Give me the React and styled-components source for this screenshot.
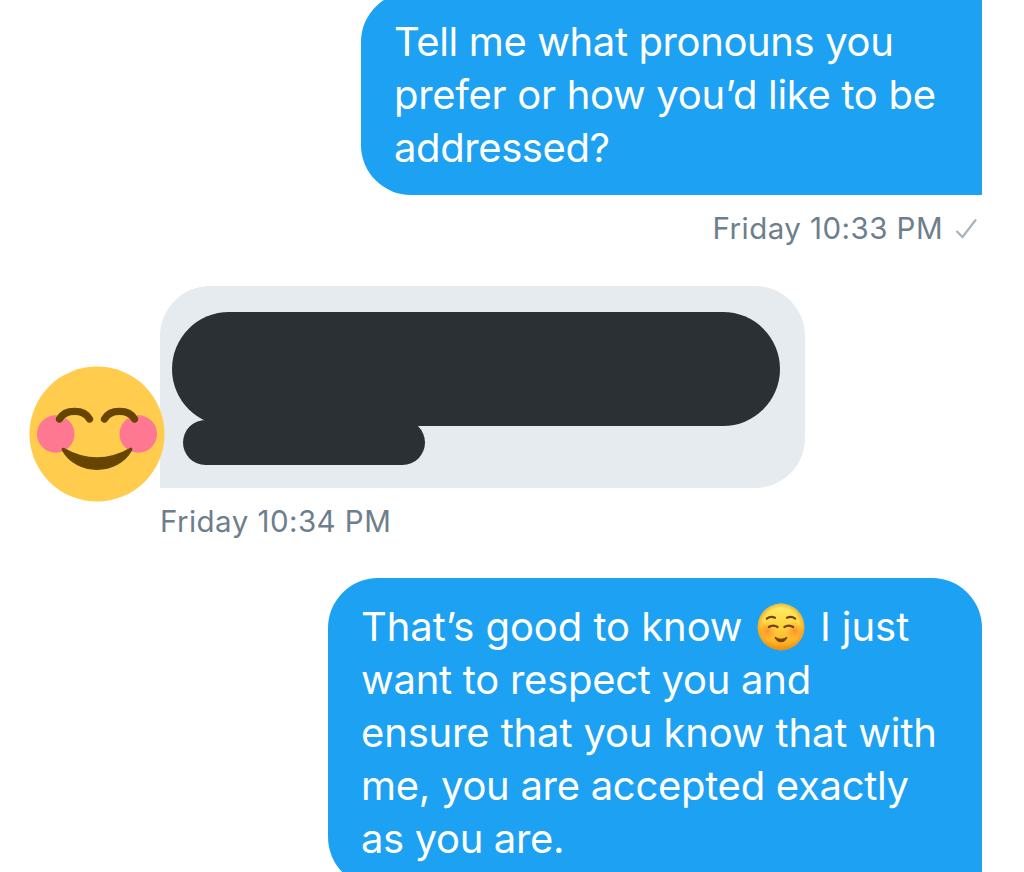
import React from 'react'
import styled, { createGlobalStyle } from 'styled-components'

const GlobalStyle = createGlobalStyle`
  * {
    box-sizing: border-box;
  }
  body {
    margin: 0;
    background: #fff;
    font-family: Inter, 'Liberation Sans', sans-serif;
  }
`

const Thread = styled.main`
  width: 1024px;
  height: 872px;
  overflow: hidden;
  display: flex;
  flex-direction: column;
  padding: 0 42px 0 29px;
`

const Bubble = styled.div`
  flex: none;
  width: ${({ $width }) => $width}px;
  border-radius: 50px;
`

const SentBubble = styled(Bubble)`
  align-self: flex-end;
  margin-top: ${({ $cut }) => ($cut ? '-8px' : 0)};
  padding: ${({ $cut }) => ($cut ? '23px 33px 21px' : '22px 33px')};
  color: #fff;
  background: #1da1f2;
  border-top-right-radius: ${({ $cut }) => ($cut ? 0 : '50px')};
  border-bottom-right-radius: 0;
`

const Line = styled.div`
  display: flex;
  align-items: center;
  height: 53px;
  font-size: 40px;
  line-height: 53px;
  letter-spacing: ${({ $tracking }) => $tracking || 0}px;
  white-space: pre;
`

const Meta = styled.div`
  flex: none;
  display: flex;
  align-items: center;
  justify-content: ${({ $sent }) => ($sent ? 'flex-end' : 'flex-start')};
  height: ${({ $sent }) => ($sent ? 91 : 90)}px;
  padding: ${({ $sent }) => ($sent ? '0 5px 25px 0' : '0 0 25px 131px')};
  color: #6d7e8d;
  font-size: 29.5px;
  line-height: 40px;
  letter-spacing: 0.45px;
  white-space: pre;
`

const Check = styled.svg`
  width: 22px;
  height: 22px;
  margin: 2px 0 0 12px;
`

const Received = styled.div`
  flex: none;
  display: flex;
  align-items: flex-start;
  height: 202px;
`

const Avatar = styled.svg`
  flex: none;
  width: 136px;
  height: 136px;
  margin: 80px -5px 0 0;
  position: relative;
  z-index: 1;
`

const ReceivedBubble = styled(Bubble)`
  height: 202px;
  padding: 26px 25px 0 11.5px;
  background: #e6ebef;
  border-bottom-left-radius: 0;
`

const Redaction = styled.div`
  width: ${({ $width }) => $width}px;
  height: ${({ $height }) => $height}px;
  border-radius: ${({ $height }) => $height / 2}px;
  background: #2b3034;
  & + & {
    margin: -6px 0 0 11.5px;
  }
`

const Emoji = styled.svg`
  width: 48px;
  height: 48px;
  margin: 0 4px 0 3px;
`

const BlushAvatar = () => (
  <Avatar viewBox="-0.13 -0.13 36.26 36.26" aria-label="Smiling face avatar">
    <circle cx="18" cy="18" r="18" fill="#ffcc4d" />
    <circle cx="7" cy="18" r="5" fill="#ff7892" />
    <circle cx="29" cy="18" r="5" fill="#ff7892" />
    <path
      d="M8 14C9.5 11.3 14.5 11.3 16 14M20 14C21.5 11.3 26.5 11.3 28 14"
      fill="none"
      stroke="#664500"
      strokeWidth="1.95"
      strokeLinecap="round"
    />
    <path
      d="M9 22.1Q18 27.2 27 22.1C23.3 28.8 12.7 28.8 9 22.1Z"
      fill="#664500"
      stroke="#664500"
      strokeWidth="0.9"
      strokeLinejoin="round"
    />
  </Avatar>
)

const SmileEmoji = () => (
  <Emoji viewBox="0 0 48 48" aria-label="Smiling face">
    <defs>
      <linearGradient id="face" x1="0" y1="0" x2="0" y2="1">
        <stop offset="0" stopColor="#fff06a" />
        <stop offset="0.45" stopColor="#ffd540" />
        <stop offset="0.8" stopColor="#fdb52a" />
        <stop offset="1" stopColor="#ee9212" />
      </linearGradient>
      <radialGradient id="rim">
        <stop offset="0.8" stopColor="#e88d10" stopOpacity="0" />
        <stop offset="1" stopColor="#e88d10" stopOpacity="0.6" />
      </radialGradient>
      <radialGradient id="cheek">
        <stop offset="0" stopColor="#ff6d1f" stopOpacity="0.6" />
        <stop offset="1" stopColor="#ff7a1f" stopOpacity="0" />
      </radialGradient>
    </defs>
    <circle cx="24" cy="24" r="23.4" fill="url(#face)" />
    <circle cx="24" cy="24" r="23.4" fill="url(#rim)" />
    <circle cx="10" cy="28" r="9" fill="url(#cheek)" />
    <circle cx="38" cy="28" r="9" fill="url(#cheek)" />
    <g fill="none" stroke="#70410d" strokeWidth="2.2" strokeLinecap="round">
      <path d="M9.8 15.6Q13.6 12.8 18 14.7M30 14.7Q34.4 12.8 38.2 15.6" />
      <path d="M11.8 24Q16.2 21.2 20.6 24M27.4 24Q31.8 21.2 36.2 24" />
    </g>
    <path
      d="M18 34.2Q24 38.2 30 34.2Q28.5 38.8 24 38.8T18 34.2Z"
      fill="#70410d"
      stroke="#70410d"
      strokeWidth="0.9"
      strokeLinejoin="round"
    />
  </Emoji>
)

export default function App() {
  return (
    <>
      <GlobalStyle />
      <Thread>
        <SentBubble $width={621} $cut>
          <Line $tracking={-0.38}>Tell me what pronouns you</Line>
          <Line $tracking={-0.31}>prefer or how you’d like to be</Line>
          <Line $tracking={-0.4}>addressed?</Line>
        </SentBubble>
        <Meta $sent>
          Friday 10:33 PM
          <Check viewBox="0 0 22 22">
            <path d="M1.5 13L7.5 19L21 1.5" fill="none" stroke="#a7b4bf" strokeWidth="2.2" />
          </Check>
        </Meta>
        <Received>
          <BlushAvatar />
          <ReceivedBubble $width={645}>
            <Redaction $width={608.5} $height={114} />
            <Redaction $width={242} $height={45} />
          </ReceivedBubble>
        </Received>
        <Meta>Friday 10:34 PM</Meta>
        <SentBubble $width={654}>
          <Line $tracking={-0.05}>
            That’s good to know <SmileEmoji /> I just
          </Line>
          <Line $tracking={-0.27}>want to respect you and</Line>
          <Line $tracking={-0.15}>ensure that you know that with</Line>
          <Line $tracking={-0.29}>me, you are accepted exactly</Line>
          <Line $tracking={-0.37}>as you are.</Line>
        </SentBubble>
      </Thread>
    </>
  )
}
